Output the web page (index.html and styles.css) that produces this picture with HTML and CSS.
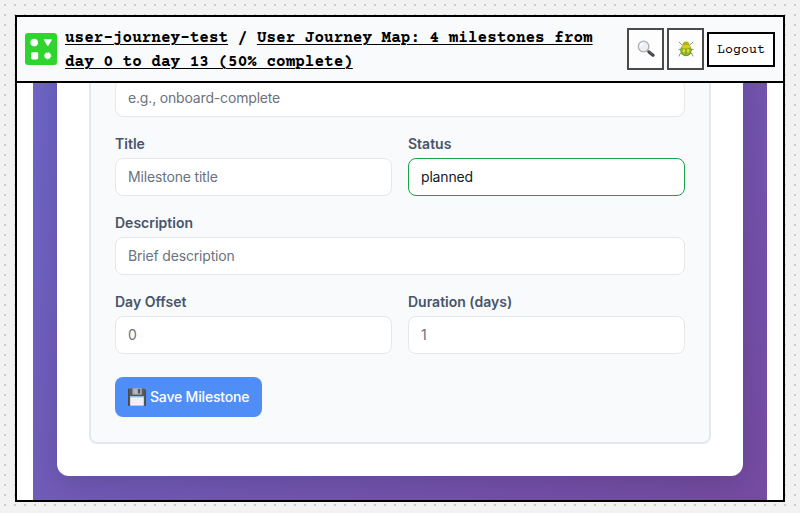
FILE: index.html
```html
<!DOCTYPE html>
<html lang="en">
<head>
<meta charset="utf-8">
<title>User Journey Map</title>
<link rel="stylesheet" href="styles.css">
</head>
<body>
<div class="window">
  <header class="topbar">
    <svg class="logo" viewBox="0 0 32 32" aria-hidden="true">
      <rect width="32" height="32" rx="3" fill="#2fd42f"/>
      <g fill="#fff">
        <circle cx="9.2" cy="9.6" r="3.8"/>
        <path d="M19.4 6.2h7q.8 0 .4.8l-3.5 5.700q-.5.7-1 0L18.900 7q-.4-.8.5-.8z"/>
        <rect x="6" y="19.200" width="7.200" height="7.200" rx="1.400"/>
        <circle cx="22.700" cy="22.800" r="3"/>
        <circle cx="22.700" cy="22.800" r="3.200" fill="none" stroke="#fff" stroke-width="1" stroke-dasharray="1.400 1.100"/>
      </g>
    </svg>
    <div class="crumbs"><a>user-journey-test</a> / <a>User Journey Map: 4 milestones from day 0 to day 13 (50% complete)</a></div>
    <div class="actions">
      <button class="icon-btn" aria-label="Search">
        <svg width="18" height="18" viewBox="0 0 18 18">
          <path d="M10.300 10.500l1.500 1.500" stroke="#888" stroke-width="1.600"/>
          <path d="M12 12l4 3.300" stroke="#454548" stroke-width="3.200" stroke-linecap="round"/>
          <path d="M12.400 11.800l3.300 2.600" stroke="#77777b" stroke-width=".7"/>
          <circle cx="6.600" cy="6.500" r="5.300" fill="#edf0f3" stroke="#aeb0b4" stroke-width="1.300"/>
          <path d="M3.500 6.200a3.200 3.200 0 0 1 3-2.900" fill="none" stroke="#fff" stroke-width="1.300"/>
        </svg>
      </button>
      <button class="icon-btn" aria-label="Report a bug">
        <svg width="18" height="18" viewBox="0 0 18 18">
          <g fill="none" stroke="#8b9a78" stroke-width="1">
            <path d="M6 5.500L4 4 1.800 1.800M12 5.500L14 4l2.200-2.200M5 9.500H1.500M13 9.500h3.500M5 12.500l-2 1.300-1 2.700M13 12.500l2 1.300 1 2.700"/>
          </g>
          <ellipse cx="9" cy="4.200" rx="3.200" ry="2.700" fill="#a8b51c"/>
          <ellipse cx="9" cy="10.300" rx="5.700" ry="6" fill="#5d9a20"/>
          <ellipse cx="9" cy="10" rx="4.900" ry="5.200" fill="#93bd26"/>
          <path d="M4.300 8q.6-3.500 4.700-3.500T13.700 8q-2 1.100-4.700 1.100T4.300 8z" fill="#e0c81f"/>
          <ellipse cx="7" cy="10.200" rx="1.300" ry="2.400" fill="#dddc3c"/>
          <ellipse cx="11" cy="10.200" rx="1.300" ry="2.400" fill="#dddc3c"/>
          <path d="M9 8.500v7.500M4.500 8.300q4.500 1.600 9 0" fill="none" stroke="#7b8a18" stroke-width=".6"/>
        </svg>
      </button>
      <button class="logout">Logout</button>
    </div>
  </header>
  <main class="viewport">
    <div class="backdrop">
      <div class="card">
        <form class="panel">
          <input class="field" placeholder="e.g., onboard-complete">
          <div class="row">
            <label>Title<input class="field" placeholder="Milestone title"></label>
            <label>Status<input class="field valid" value="planned"></label>
          </div>
          <label>Description<input class="field" placeholder="Brief description"></label>
          <div class="row">
            <label>Day Offset<input class="field" placeholder="0"></label>
            <label>Duration (days)<input class="field" placeholder="1"></label>
          </div>
          <button class="save" type="button">
            <svg width="18" height="18" viewBox="0 0 18 18" aria-hidden="true">
              <path d="M0 .5h16.600l1.400 1.400V18H0z" fill="#555a5c"/>
              <path d="M.6 1v16.400M17.300 2.200v15.200" stroke="#414547" stroke-width=".8"/>
              <rect x="4.500" y=".3" width="9.500" height="6.200" fill="#b5b9bb"/>
              <path d="M5 .5v5.800M13.600.5v5.800" stroke="#8c9092" stroke-width=".8"/>
              <rect x="9.800" y="1" width="2.500" height="4.500" fill="#55595c"/>
              <rect x="2.200" y="8" width="13.600" height="9.700" fill="#f4f4f4"/>
              <rect x="2.200" y="8" width="13.600" height="1.500" fill="#85bfe5"/>
              <path d="M3 12h12M3 14.500h12" stroke="#dfe2e4" stroke-width=".6"/>
            </svg>
            <span>Save Milestone</span>
          </button>
        </form>
      </div>
    </div>
  </main>
</div>
</body>
</html>
```
FILE: styles.css
```css
* { box-sizing: border-box; }
body {
  margin: 0;
  height: 513px;
  padding: 15px 15px 11px;
  overflow: hidden;
  background: #f2f2f2 conic-gradient(from 270deg at 2px 2px, #ccc 90deg, transparent 0) 4px 4px / 10px 10px;
  font-family: Inter, sans-serif;
  font-size: 14px;
}
.window {
  display: flex;
  flex-direction: column;
  height: 487px;
  border: 2px solid #000;
  background: #fff;
}
.topbar {
  display: flex;
  flex: none;
  align-items: center;
  gap: 8px;
  height: 66px;
  padding: 0 8px;
  border-bottom: 2px solid #000;
  background: #f9fafc;
}
.logo { flex: none; width: 32px; height: 32px; }
.crumbs {
  flex: 1;
  padding-top: 2px;
  font: bold 16px/24px "Courier Prime", "Liberation Mono", monospace;
  color: #000;
}
.crumbs a { text-decoration: underline; text-decoration-thickness: 1px; text-underline-offset: 2px; }
.actions { display: flex; align-items: center; gap: 3px; }
button { margin: 0; padding: 0; font: inherit; }
.icon-btn {
  display: flex;
  align-items: center;
  justify-content: center;
  width: 37px;
  height: 42px;
  border: 2px solid #4a4a4a;
  background: #fdfdfd;
}
.logout {
  width: 68px;
  height: 35px;
  padding-top: 3px;
  border: 2px solid #000;
  background: #fff;
  color: #000;
  font: 13.333px "Courier Prime", "Liberation Mono", monospace;
}
.viewport {
  display: flex;
  flex: 1;
  min-height: 0;
  align-items: flex-end;
  overflow: hidden;
  padding: 0 16px;
}
.backdrop {
  display: flex;
  flex: none;
  width: 100%;
  height: 1520px;
  padding: 24px;
  background: linear-gradient(135deg, #667eea 0%, #764ba2 100%);
}
.card {
  display: flex;
  flex: 1;
  align-items: flex-end;
  padding: 32px;
  border-radius: 12px;
  background: #fff;
  box-shadow: 0 8px 32px rgba(0, 0, 0, .15);
}
.panel {
  display: flex;
  flex: 1;
  flex-direction: column;
  gap: 16px;
  padding: 24px 24px 25px;
  border: 2px solid #e2e8f0;
  border-radius: 8px;
  background: #f9fafc;
}
.row { display: grid; grid-template-columns: 1fr 1fr; gap: 16px; }
label {
  display: flex;
  flex-direction: column;
  gap: 4px;
  color: #475569;
  font-weight: 600;
  line-height: 21px;
}
.field {
  width: 100%;
  height: 38px;
  padding: 0 12px 2px;
  border: 1px solid #e5e7eb;
  border-radius: 8px;
  background: #fff;
  color: #111827;
  font: 400 14px/20px Inter, sans-serif;
  letter-spacing: -.17px;
}
.field::placeholder { color: #6b7280; opacity: 1; }
.valid { border-color: #16a34a; }
.save {
  display: flex;
  align-items: center;
  align-self: flex-start;
  gap: 4px;
  height: 40px;
  margin-top: 7px;
  padding: 0 13px 1px;
  border: 0;
  border-radius: 8px;
  background: #4f8ef7;
  color: #fff;
  font-weight: 500;
  letter-spacing: -.18px;
}
```
